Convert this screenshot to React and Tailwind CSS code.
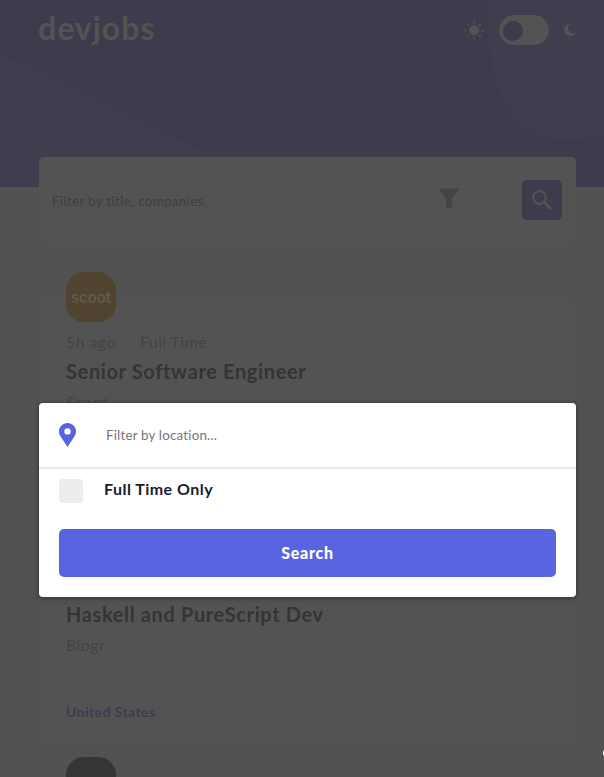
import React from "react";

function Sun() {
  return (
    <svg width="20" height="20" viewBox="0 0 20 20" fill="#535353" className="shrink-0">
      <circle cx="10" cy="10.300" r="5" />
      <g stroke="#535353" strokeWidth="1.500">
        <path d="M10 1.300v2.400M10 17v2.400M0 10.500h3M17 10.500h3M3.200 3.500l2.200 2.200M14.600 14.900l2.200 2.200M3.200 17.100l2.200-2.200M14.600 5.700l2.200-2.200" />
      </g>
    </svg>
  );
}

function Moon() {
  return (
    <svg width="12" height="12" viewBox="0 0 12 12" className="shrink-0">
      <path d="M6 0h2.200A4.600 4.600 0 0 0 4 4.700a4.400 4.400 0 0 0 4.600 4.300c1.300 0 2.500-.5 3.400-1.600A6 6 0 1 1 6 0z" fill="#535353" />
    </svg>
  );
}

function Job({ logo, logoClass, time, title, company, country }) {
  return (
    <article className="flex h-[199.5px] flex-col rounded-md bg-[#535353] px-[27px]">
      <div className={`-mt-[28px] flex h-[50px] w-[50px] shrink-0 items-center justify-center rounded-[18px] ${logoClass}`}>
        {logo}
      </div>
      <div className="mt-[8px] flex h-6 shrink-0 items-center text-[16px] text-[#434449]">
        <span className="w-[50px] tracking-[0.4px] whitespace-nowrap">{time}</span>
        <span className="w-6 pl-[9px] text-[#48494c]">.</span>
        <span className="tracking-[0.4px]">Full Time</span>
      </div>
      <h2 className="mt-[3px] h-7 shrink-0 text-[20px] leading-7 font-bold tracking-[0.63px] whitespace-nowrap text-[#333436]">{title}</h2>
      <p className="mt-[5px] h-6 shrink-0 text-[16px] leading-6 tracking-[0.4px] text-[#434449]">{company}</p>
      <p className="mt-[45px] h-5 shrink-0 text-[14px] leading-5 font-bold tracking-[0.43px] text-[#3c3c50]">{country}</p>
    </article>
  );
}

export default function App() {
  return (
    <div className="relative h-[777px] w-[604px] overflow-hidden bg-[#505352] font-['Lato','Open_Sans',sans-serif]">
      <header className="relative h-[187px] overflow-hidden bg-[#3c3c4d]">
        <svg className="absolute inset-0" width="604" height="187" viewBox="0 0 604 187">
          <path d="M0 53L278 187H0z" fill="#3e3e4f" />
          <path d="M487 0C489 50 492 80 503 101C521 133 547 141 567 141C581 141 593 138 604 134V0z" fill="#3e3e4f" />
        </svg>
        <div className="relative flex h-[60px] items-center pr-[28px] pl-[38px]">
          <h1 className="-mt-[4px] flex-1 text-[32px] leading-10 font-bold tracking-[1px] text-[#535353]">devjobs</h1>
          <Sun />
          <div className="mr-[15px] ml-[15px] flex h-[30px] w-[50px] items-center rounded-full bg-[#535353] px-1">
            <div className="mt-[2px] h-5 w-5 rounded-full bg-[#3c3c4d]" />
          </div>
          <Moon />
        </div>
      </header>

      <main className="relative -mt-[30px] pr-[28px] pl-[39px]">
        <div className="flex h-[86px] items-center rounded-[5px] bg-[#535353] pr-[14px] pl-[13px]">
          <span className="mt-[3px] flex-1 text-[13.333px] tracking-[0.35px] text-[#3f3f3f]">Filter by title, companies,</span>
          <svg className="mr-[63px] mb-[4px]" width="20" height="21" viewBox="0 0 20 21">
            <path d="M0 0.500h20v1.300l-7 8.400v8.700l-2.400 1.600H7V10.200L0 1.800z" fill="#40454a" />
          </svg>
          <div className="flex h-10 w-10 items-center justify-center rounded-[5px] bg-[#3c3c4d]">
            <svg width="20" height="20" viewBox="0 0 20 20" fill="none" stroke="#535353">
              <circle cx="7.500" cy="7.500" r="6.300" strokeWidth="2.300" />
              <path d="M12.200 12.200L19 19" strokeWidth="2.700" />
            </svg>
          </div>
        </div>

        <div className="mt-[57px] flex flex-col gap-[43px]">
          <Job
            logo={<span className="font-['Inter',sans-serif] text-[15px] leading-none font-semibold tracking-[-0.1px] text-[#605a50]">scoot</span>}
            logoClass="bg-[#50432f]"
            time="5h ago"
            title="Senior Software Engineer"
            company="Scoot"
            country="United Kingdom"
          />
          <Job
            logoClass="bg-[#4b3632]"
            time="20h ago"
            title="Haskell and PureScript Dev"
            company="Blogr"
            country="United States"
          />
          <article className="flex h-[199.5px] flex-col rounded-md bg-[#535353] px-[27px]">
            <div className="-mt-[28px] h-[50px] w-[50px] rounded-[18px] bg-[#353537]" />
          </article>
        </div>
      </main>

      <section className="absolute top-[403px] left-[39px] flex h-[194px] w-[537px] flex-col rounded-[4px] bg-white shadow-[0_1px_5px_rgba(0,0,0,0.45)]">
        <div className="flex h-[66px] items-center border-b-2 border-[#e8e8e8] px-5">
          <svg width="17" height="24" viewBox="0 0 17 24">
            <path fillRule="evenodd" d="M8.500 0C3.800 0 0 3.700 0 8.400c0 1.900.6 3.500 1.600 5L8.500 24l6.900-10.600c1-1.500 1.600-3.100 1.600-5C17 3.700 13.200 0 8.500 0zm0 11.600a3.200 3.200 0 1 1 0-6.400 3.200 3.200 0 0 1 0 6.400z" fill="#5964e0" />
          </svg>
          <span className="ml-[30px] pt-px text-[13.333px] tracking-[0.2px] text-[#757575]">Filter by location...</span>
        </div>
        <div className="flex h-[60px] px-5 pt-[10px]">
          <div className="h-6 w-6 rounded-[3px] bg-[#ededed]" />
          <span className="ml-[21px] text-[16px] leading-[20px] font-bold tracking-[0.47px] text-[#19202d]">Full Time Only</span>
        </div>
        <button className="mx-5 h-12 rounded-[5px] bg-[#5964e0] text-[16px] font-black tracking-[0.7px] text-white">Search</button>
      </section>

      <div className="absolute top-[747px] left-[603px] h-3 w-3 rounded-full bg-white" />
    </div>
  );
}
